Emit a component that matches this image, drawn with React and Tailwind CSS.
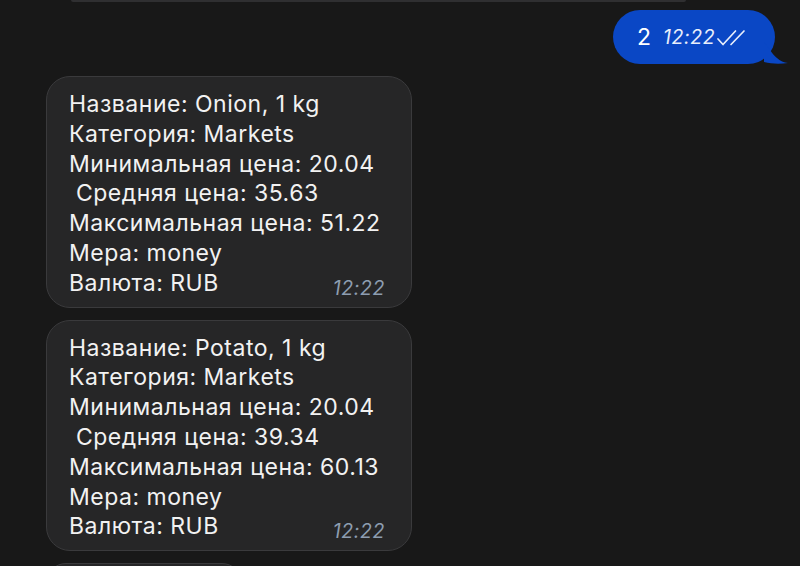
import React from 'react';

const products = [
  { name: 'Onion, 1 kg', min: '20.04', avg: '35.63', max: '51.22' },
  { name: 'Potato, 1 kg', min: '20.04', avg: '39.34', max: '60.13' },
];

const DoubleCheck = () => (
  <svg width="32" height="20" viewBox="0 0 32 20" fill="none" stroke="currentColor" strokeWidth="1.7" strokeLinecap="round" strokeLinejoin="round">
    <path d="M2 11 L7 16.5 L19.5 3" />
    <path d="M15 16.5 L28 3" />
  </svg>
);

const IncomingBubble = ({ item }) => (
  <div className="w-[366px] rounded-[24px] bg-[#262627] border border-[#3a3a3c] pl-[22px] pr-[26px] pt-[13px] pb-[8px] text-[23px] tracking-[0.5px] leading-[29.8px] text-[#f2f2f2]">
    <div>Название: {item.name}</div>
    <div>Категория: Markets</div>
    <div>Минимальная цена: {item.min}</div>
    <div>&nbsp;Средняя цена: {item.avg}</div>
    <div>Максимальная цена: {item.max}</div>
    <div>Мера: money</div>
    <div className="flex justify-between items-end">
      <span>Валюта: RUB</span>
      <span className="italic text-[19.5px] tracking-[0.6px] leading-[24px] text-[#8d9db0] translate-y-[1px]">12:22</span>
    </div>
  </div>
);

export default function App() {
  return (
    <div className="w-[800px] h-[566px] overflow-hidden bg-[#181818]" style={{ fontFamily: 'Inter, "Noto Sans", sans-serif' }}>
      <div className="ml-[71px] w-[615px] h-[2px] bg-[#2f2f31] rounded-b" />

      <div className="flex justify-end pr-[25px] mt-[8px]">
        <div className="relative">
          <div className="w-[162px] h-[54px] rounded-[27px] bg-[#0a47c5] flex items-center pl-[24px] gap-[12px] text-white">
            <span className="text-[23px] leading-none">2</span>
            <span className="flex items-center gap-[1px] translate-y-[1px]">
              <span className="italic text-[19.5px] tracking-[0.6px] leading-none text-[#e8eefb]">12:22</span>
              <span className="text-[#e8eefb]"><DoubleCheck /></span>
            </span>
          </div>
          <svg className="absolute right-[-13px] bottom-0" width="24" height="22" viewBox="0 0 24 22">
            <path d="M0 0 C6 8 10 14 13 16 C16 19 20 20.5 24 21 C16 22 8 22 0 20 Z" fill="#0a47c5" />
          </svg>
        </div>
      </div>

      <div className="flex flex-col gap-[12px] pl-[46px] mt-[12px]">
        {products.map((p) => (
          <IncomingBubble key={p.name} item={p} />
        ))}
        <div className="w-[196px] h-[40px] rounded-[24px] bg-[#262627] border border-[#3a3a3c]" />
      </div>
    </div>
  );
}
